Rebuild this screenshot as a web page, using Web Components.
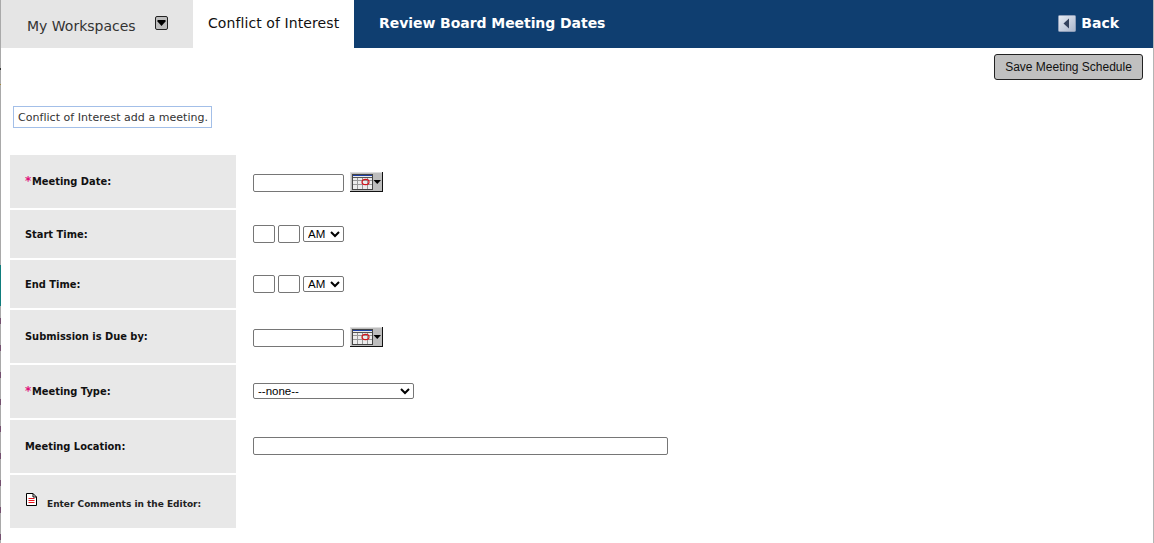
<!DOCTYPE html>
<html lang="en"><head><meta charset="utf-8"><title>Review Board Meeting Dates</title>
<style>
html,body{margin:0;padding:0;background:#fff;height:100%;overflow:hidden}
body{font-family:"DejaVu Sans",Verdana,sans-serif;color:#000}
</style></head><body>
<app-page>
  <app-tabbar>
    <app-tab slot="tabs" kind="menu">My Workspaces</app-tab>
    <app-tab slot="tabs" kind="active">Conflict of Interest</app-tab>
    <app-tab slot="tabs" kind="title">Review Board Meeting Dates</app-tab>
    <back-link slot="end">Back</back-link>
  </app-tabbar>
  <app-toolbar><save-button>Save Meeting Schedule</save-button></app-toolbar>
  <intro-note>Conflict of Interest add a meeting.</intro-note>
  <form-table>
    <form-row h="53" required label="Meeting Date:"><date-field></date-field></form-row>
    <form-row h="48" label="Start Time:"><time-field></time-field></form-row>
    <form-row h="48" label="End Time:"><time-field></time-field></form-row>
    <form-row h="53" label="Submission is Due by:"><date-field></date-field></form-row>
    <form-row h="53" required label="Meeting Type:"><type-select></type-select></form-row>
    <form-row h="53" label="Meeting Location:"><text-field w="415"></text-field></form-row>
    <form-row h="53" doc label="Enter Comments in the Editor:"></form-row>
  </form-table>
</app-page>
<script>
function def(name, html, setup){
  customElements.define(name, class extends HTMLElement{
    constructor(){super();this.attachShadow({mode:'open'});}
    connectedCallback(){
      this.shadowRoot.innerHTML = typeof html==='function' ? html(this) : html;
      if(setup) setup(this);
    }
  });
}
const stripe=[[68,2,'#333'],[84,1,'#a58a3c'],[265,41,'#0f7d7d']];
for(let y=318;y<543;y+=27) stripe.push([y,6,'#74506f']);
const stripeBg=stripe.map(([y,h,c])=>`linear-gradient(${c},${c}) 0 ${y}px/1px ${h}px no-repeat`).join(',')+`,linear-gradient(#a9a9a9,#a9a9a9) 0 0/1px 100% no-repeat`;
def('app-page',`<style>:host{display:block;height:543px;box-sizing:border-box;padding-left:1px;border-right:1px solid #b4b4b4;overflow:hidden;background:${stripeBg},#fff}</style><slot></slot>`);
def('app-tabbar',`<style>
:host{display:flex;height:48px;background:#0f3e70;align-items:stretch}
.tabs{display:flex;align-items:stretch;flex:1}
.end{display:flex;align-items:center;padding-right:34px}
</style><div class="tabs"><slot name="tabs"></slot></div><div class="end"><slot name="end"></slot></div>`);
def('app-tab',el=>{
  const k=el.getAttribute('kind');
  const css={
    menu:`width:192px;background:#e5e5e5;color:#333;padding-left:26px;padding-top:3px;font-size:14px;`,
    active:`width:161px;background:#fff;color:#111;padding-left:15px;padding-bottom:2px;font-size:14px;letter-spacing:.09px;`,
    title:`padding-left:25px;padding-bottom:2px;color:#fff;font-weight:bold;font-size:14px;letter-spacing:-.06px;`
  }[k];
  const icon=k==='menu'?`<svg width="13" height="14" viewBox="0 0 13 14" style="position:absolute;left:154px;top:16px"><rect x=".5" y=".5" width="12" height="13" rx="1.5" fill="#bdbdbd" stroke="#222"/><path d="M2.500 4h8v1.500L6.500 10 2.500 5.500z" fill="#000"/></svg>`:'';
  return `<style>:host{display:flex;align-items:center;box-sizing:border-box;white-space:nowrap;position:relative;${css}}</style><slot></slot>${icon}`;
});
def('back-link',`<style>:host{display:flex;align-items:center;gap:5px;color:#fff;font-weight:bold;font-size:14px;padding-bottom:2px}</style>
<svg width="18" height="17" viewBox="0 0 18 17"><defs><linearGradient id="g" x1="0" y1="0" x2="1" y2="1"><stop offset="0" stop-color="#e8ecf4"/><stop offset="1" stop-color="#aab6cc"/></linearGradient></defs><rect x=".5" y=".5" width="17" height="16" rx="1" fill="url(#g)" stroke="#8d9db8"/><path d="M11 3.500v10L5.500 8.500z" fill="#33415c"/></svg><slot></slot>`);
def('app-toolbar',`<style>:host{display:flex;justify-content:flex-end;padding:6px 10px 0 0}</style><slot></slot>`);
def('save-button',`<style>:host{display:block}
button{display:block;width:149px;height:26px;box-sizing:border-box;padding:0;background:#c0c0c0;border:1px solid #222;border-radius:3px;font:12px "Liberation Sans",Arial,sans-serif;color:#111}</style><button type="button"><slot></slot></button>`);
def('intro-note',`<style>:host{display:block;width:199px;height:22px;box-sizing:border-box;margin:26px 0 0 12px;border:1px solid #a3bfe8;font-size:11px;letter-spacing:.04px;line-height:21px;padding-left:4px;white-space:nowrap;color:#333;overflow:hidden}</style><slot></slot>`);
def('form-table',`<style>:host{display:grid;gap:2px;margin:27px 0 0 9px;width:700px}</style><slot></slot>`);
def('form-row',el=>{
  const h=el.getAttribute('h'), req=el.hasAttribute('required'), doc=el.hasAttribute('doc');
  const icon=`<svg class="doc" width="11" height="13" viewBox="0 0 11 13"><path d="M.5.5h6.500l3.500 3.500v8.500h-10z" fill="#fff" stroke="#000"/><path d="M7 .5v3.500h3.500" fill="none" stroke="#000"/><path d="M2.500 5.500h6M2.500 7.500h6M2.500 9.500h6" stroke="#e8141c" stroke-width="1"/></svg>`;
  return `<style>
:host{display:grid;grid-template-columns:226px 1fr;height:${h}px}
.l{background:#e8e8e8;display:flex;align-items:center;padding:${h==48?'1px':'0'} 0 ${h==48?'0':'1px'} 15px;box-sizing:border-box;font-size:9.9px;font-weight:bold;color:#111;white-space:nowrap}
.l.d{align-items:flex-start;padding-top:19px;font-size:9px}
.c{display:flex;align-items:center;padding-left:17px}
i{font-style:normal;color:#e0107a;font-size:12px;line-height:10px;width:7px}
.doc{margin:0 10px 0 1px;position:relative;top:-1px}
.t{margin-top:5px;color:#222}
</style>
<div class="l ${doc?'d':''}">${doc?icon+'<span class="t">'+el.getAttribute('label')+'</span>':(req?'<i>*</i>':'')+'<span>'+el.getAttribute('label')+'</span>'}</div><div class="c"><slot></slot></div>`;
});
const inputCss=`input{box-sizing:border-box;height:18px;border:1px solid #767676;border-radius:2px;background:#fff;padding:0;margin:0;display:block}`;
def('text-field',el=>`<style>:host{display:block;position:relative;top:-1px}${inputCss}</style><input type="text" style="width:${el.getAttribute('w')}px" aria-label="Meeting Location">`);
def('date-field',`<style>:host{display:flex;align-items:center;gap:6px;position:relative;top:1px}${inputCss}input{width:91px}svg{display:block;position:relative;top:-1px}</style>
<input type="text" aria-label="Date">
<svg width="33" height="20" viewBox="0 0 33 20">
<rect width="33" height="20" fill="#bdbdbd"/>
<path d="M0 0h33v1H1v18H0z" fill="#dcdcdc"/><path d="M33 20H0v-1h32V0h1z" fill="#111"/>
<rect x="2.500" y="2.500" width="20" height="15" fill="#ececec" stroke="#444"/>
<rect x="3" y="3" width="19" height="1" fill="#1c3fa8"/>
<path d="M3 8.500h19M3 12.500h19M7.500 5v12M12.500 5v12M17.500 5v12" stroke="#999"/>
<path d="M3 5.500h19" stroke="#555"/>
<ellipse cx="15.500" cy="10" rx="3.500" ry="2.700" fill="none" stroke="#d4141c" stroke-width="1.200"/>
<path d="M23.500 8h7.500l-3.750 4z" fill="#000"/></svg>`);
const selCss=`select{display:block;box-sizing:border-box;border:1px solid #767676;border-radius:2px;background:#fff;color:#000;margin:0;padding:0;font:11.5px "Liberation Sans",Arial,sans-serif}`;
def('time-field',`<style>:host{display:flex;align-items:center;gap:3px}${inputCss}${selCss}input{width:22px}select{width:41px;height:16px;margin-left:0}</style>
<input type="text" aria-label="Hour"><input type="text" aria-label="Minute"><select aria-label="AM or PM"><option>AM</option><option>PM</option></select>`);
def('type-select',`<style>:host{display:block;position:relative;top:-1px}${selCss}select{width:161px;height:16px}</style><select aria-label="Meeting Type"><option>--none--</option></select>`);
</script>
</body></html>
